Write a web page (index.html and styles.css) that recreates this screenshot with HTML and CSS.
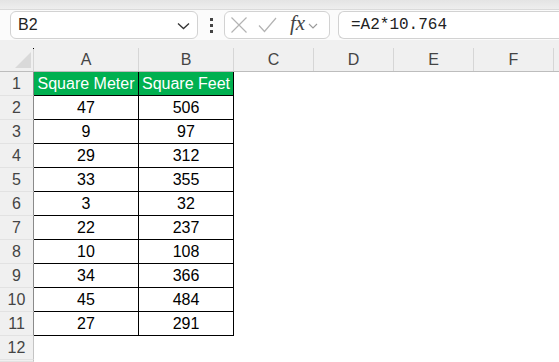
FILE: index.html
```html
<!DOCTYPE html>
<html>
<head>
<meta charset="utf-8">
<link rel="stylesheet" href="styles.css">
</head>
<body>
<div class="app">
  <div class="topstrip"></div>
  <div class="fbar">
    <div class="namebox">
      <span class="nb-text">B2</span>
      <svg class="nb-chev" width="13" height="8" viewBox="0 0 13 8"><path d="M1 1.5 L6.5 6.5 L12 1.5" fill="none" stroke="#333" stroke-width="1.3"/></svg>
    </div>
    <div class="dots"><i></i><i></i><i></i></div>
    <div class="fxbox">
      <svg class="ico" width="18" height="18" viewBox="0 0 18 18"><path d="M1.5 1.5 L16.5 16.5 M16.5 1.5 L1.5 16.5" fill="none" stroke="#b3b3b3" stroke-width="1.2"/></svg>
      <svg class="ico" width="19" height="18" viewBox="0 0 19 18"><path d="M1 9.5 L6.5 15.5 L18 2" fill="none" stroke="#b3b3b3" stroke-width="1.2"/></svg>
      <span class="fx">fx</span>
      <svg class="fx-chev" width="10" height="6" viewBox="0 0 10 6"><path d="M1 1 L5 5 L9 1" fill="none" stroke="#999" stroke-width="1.1"/></svg>
    </div>
    <div class="formula">=A2*10.764</div>
  </div>
  <div class="colhead">
    <div class="corner"><span class="tri"></span><span class="dot"></span></div>
    <div class="ch">A</div>
    <div class="ch">B</div>
    <div class="ch">C</div>
    <div class="ch">D</div>
    <div class="ch">E</div>
    <div class="ch">F</div>
    <div class="ch rest"></div>
  </div>
  <div class="sheet">
    <div class="row"><div class="rh tb">1</div><div class="c t hdr">Square Meter</div><div class="c t hdr">Square Feet</div><div class="c"></div><div class="c"></div><div class="c"></div><div class="c"></div><div class="c"></div></div>
    <div class="row"><div class="rh tb">2</div><div class="c t">47</div><div class="c t">506</div><div class="c"></div><div class="c"></div><div class="c"></div><div class="c"></div><div class="c"></div></div>
    <div class="row"><div class="rh tb">3</div><div class="c t">9</div><div class="c t">97</div><div class="c"></div><div class="c"></div><div class="c"></div><div class="c"></div><div class="c"></div></div>
    <div class="row"><div class="rh tb">4</div><div class="c t">29</div><div class="c t">312</div><div class="c"></div><div class="c"></div><div class="c"></div><div class="c"></div><div class="c"></div></div>
    <div class="row"><div class="rh tb">5</div><div class="c t">33</div><div class="c t">355</div><div class="c"></div><div class="c"></div><div class="c"></div><div class="c"></div><div class="c"></div></div>
    <div class="row"><div class="rh tb">6</div><div class="c t">3</div><div class="c t">32</div><div class="c"></div><div class="c"></div><div class="c"></div><div class="c"></div><div class="c"></div></div>
    <div class="row"><div class="rh tb">7</div><div class="c t">22</div><div class="c t">237</div><div class="c"></div><div class="c"></div><div class="c"></div><div class="c"></div><div class="c"></div></div>
    <div class="row"><div class="rh tb">8</div><div class="c t">10</div><div class="c t">108</div><div class="c"></div><div class="c"></div><div class="c"></div><div class="c"></div><div class="c"></div></div>
    <div class="row"><div class="rh tb">9</div><div class="c t">34</div><div class="c t">366</div><div class="c"></div><div class="c"></div><div class="c"></div><div class="c"></div><div class="c"></div></div>
    <div class="row"><div class="rh tb">10</div><div class="c t">45</div><div class="c t">484</div><div class="c"></div><div class="c"></div><div class="c"></div><div class="c"></div><div class="c"></div></div>
    <div class="row"><div class="rh tb">11</div><div class="c t">27</div><div class="c t">291</div><div class="c"></div><div class="c"></div><div class="c"></div><div class="c"></div><div class="c"></div></div>
    <div class="row"><div class="rh">12</div><div class="c"></div><div class="c"></div><div class="c"></div><div class="c"></div><div class="c"></div><div class="c"></div><div class="c"></div></div>
    <div class="row short"><div class="rh"></div><div class="c"></div></div>
  </div>
</div>
</body>
</html>
```

FILE: styles.css
```css
* { box-sizing: border-box; }
html, body { margin: 0; padding: 0; }
body {
  width: 559px;
  height: 362px;
  overflow: hidden;
  background: #ffffff;
  font-family: "Liberation Sans", Arial, sans-serif;
}
.app { width: 559px; }

.topstrip {
  height: 10px;
  background: linear-gradient(#e4e4e4, #eeeeee);
  border-bottom: 1px solid #dadada;
}

.fbar {
  height: 30px;
  background: #fbfbfb;
  display: flex;
  align-items: flex-start;
  padding-top: 1px;
  padding-left: 10px;
}
.namebox {
  width: 188px;
  height: 28px;
  background: #fff;
  border: 1px solid #d2d2d2;
  border-radius: 6px;
  display: flex;
  align-items: center;
  justify-content: space-between;
  padding: 0 7px 0 7px;
}
.nb-text { font-size: 16px; color: #222; }
.nb-chev { margin-top: 1px; }

.dots {
  width: 26px;
  height: 28px;
  display: flex;
  flex-direction: column;
  align-items: center;
  justify-content: center;
  gap: 3px;
}
.dots i {
  display: block;
  width: 3px;
  height: 3px;
  background: #444;
}

.fxbox {
  width: 106px;
  height: 28px;
  background: #fff;
  border: 1px solid #d2d2d2;
  border-radius: 6px;
  display: flex;
  align-items: center;
  padding-left: 5px;
}
.fxbox .ico { margin-right: 10px; }
.fxbox .ico + .ico { margin-right: 13px; }
.fx {
  font-family: "Liberation Serif", "DejaVu Serif", serif;
  font-style: italic;
  font-size: 21px;
  color: #444;
  margin-right: 3px;
  margin-top: -3px;
}
.fx-chev { margin-top: 2px; }

.formula {
  flex: 1;
  height: 28px;
  margin-left: 8px;
  background: #fff;
  border: 1px solid #d2d2d2;
  border-right: none;
  border-radius: 6px 0 0 6px;
  display: flex;
  align-items: center;
  padding-left: 12px;
  font-family: "Liberation Mono", "DejaVu Sans Mono", monospace;
  font-size: 16px;
  color: #222;
}

.colhead, .row {
  display: grid;
  grid-template-columns: 34px 105px 95px 80px 80px 80px 80px 1fr;
}
.colhead {
  background: #f0f0f0;
  padding-top: 8px;
  border-bottom: 1px solid #bdbdbd;
}
.ch {
  height: 23px;
  border-right: 1px solid #d6d6d6;
  display: flex;
  align-items: center;
  justify-content: center;
  font-size: 16px;
  color: #444;
}
.ch.rest { border-right: none; }
.corner {
  position: relative;
  height: 23px;
  border-right: 1px solid #d6d6d6;
  display: flex;
  align-items: flex-end;
  justify-content: flex-end;
  padding: 0 2px 3px 0;
}
.tri {
  display: block;
  width: 16px;
  height: 16px;
  background: #d9d9d9;
  clip-path: polygon(100% 0, 100% 100%, 0 100%);
}
.dot {
  position: absolute;
  right: -1px;
  top: 0;
  width: 1px;
  height: 1px;
  background: #000;
}

.row { height: 24px; }
.row.short { height: 2px; }
.rh {
  background: #f0f0f0;
  border-right: 1px solid #c4c4c4;
  border-bottom: 1px solid #e2e2e2;
  display: flex;
  align-items: center;
  justify-content: center;
  font-size: 16px;
  color: #444;
}
.rh.tb { border-right-color: #8a8a8a; }
.c {
  display: flex;
  align-items: center;
  justify-content: center;
  font-size: 16px;
  color: #000;
  white-space: nowrap;
}
.c.t {
  border-right: 1px solid #000;
  border-bottom: 1px solid #000;
}
.c.hdr {
  background: #00b050;
  color: #fff;
}
```
